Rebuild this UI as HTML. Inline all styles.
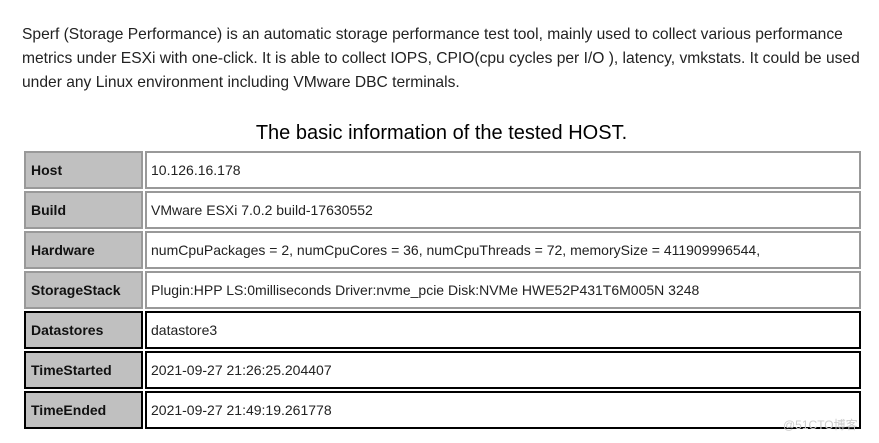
<!DOCTYPE html>
<html><head><meta charset="utf-8"><style>
body{margin:0;width:879px;height:443px;background:#fff;font-family:"Liberation Sans",Arial,sans-serif;color:#222;position:relative;overflow:hidden}
.p{position:absolute;left:22px;font-size:15.6px;white-space:nowrap}
.t{position:absolute;left:0;width:883px;text-align:center;top:122px;font-size:20px;color:#000}
.c{position:absolute;height:34px;line-height:34px;font-size:14px;box-sizing:content-box;white-space:nowrap}
.l{left:24px;background:#c0c0c0;font-weight:bold;color:#111;padding-left:5px;width:110px}
.v{left:145px;width:708px;padding-left:4px;background:#fff;color:#222}
.g{border:2px solid #999}
.k{border:2px solid #000}
</style></head><body>
<div class="p" style="top:26px">Sperf (Storage Performance) is an automatic storage performance test tool, mainly used to collect various performance</div>
<div class="p" style="top:50px">metrics under ESXi with one-click. It is able to collect IOPS, CPIO(cpu cycles per I/O ), latency, vmkstats. It could be used</div>
<div class="p" style="top:74px">under any Linux environment including VMware DBC terminals.</div>
<div class="t">The basic information of the tested HOST.</div>

<div class="c l g" style="top:151px">Host</div><div class="c v g" style="top:151px">10.126.16.178</div>
<div class="c l g" style="top:191px">Build</div><div class="c v g" style="top:191px">VMware ESXi 7.0.2 build-17630552</div>
<div class="c l g" style="top:231px">Hardware</div><div class="c v g" style="top:231px">numCpuPackages = 2, numCpuCores = 36, numCpuThreads = 72, memorySize = 411909996544,</div>
<div class="c l g" style="top:271px">StorageStack</div><div class="c v g" style="top:271px">Plugin:HPP LS:0milliseconds Driver:nvme_pcie Disk:NVMe HWE52P431T6M005N 3248</div>
<div class="c l k" style="top:311px">Datastores</div><div class="c v k" style="top:311px">datastore3</div>
<div class="c l k" style="top:351px">TimeStarted</div><div class="c v k" style="top:351px">2021-09-27 21:26:25.204407</div>
<div class="c l k" style="top:391px">TimeEnded</div><div class="c v k" style="top:391px">2021-09-27 21:49:19.261778</div>
<div style="position:absolute;left:783px;top:416px;font-size:12px;color:#ccc">@51CTO博客</div>
</body></html>
